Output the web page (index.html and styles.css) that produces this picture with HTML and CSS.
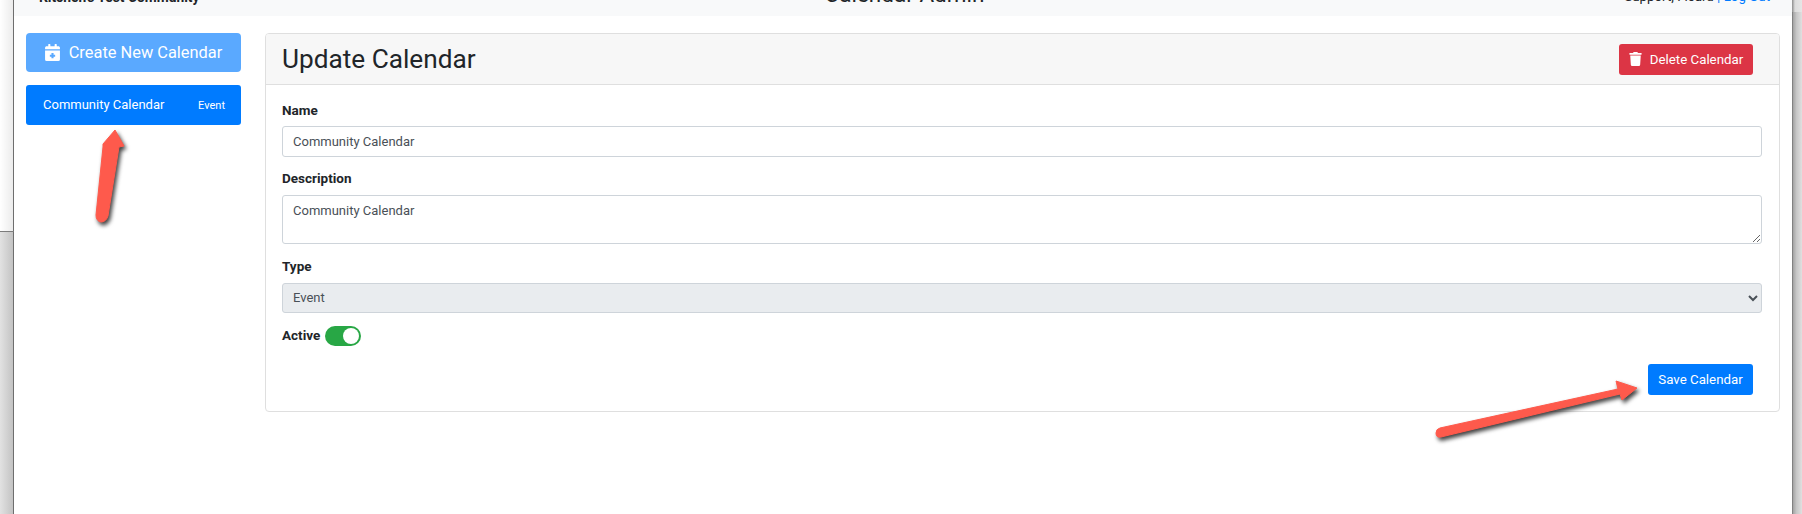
FILE: index.html
```html
<!DOCTYPE html>
<html lang="en">
<head>
<meta charset="utf-8">
<title>Calendar Admin</title>
<link rel="stylesheet" href="styles.css">
</head>
<body>
<div class="backdrop-left"><div class="bl-top"></div><div class="bl-bottom"></div></div>
<main class="modal">
  <header class="topbar">
    <div class="tb-left">Kitchen's Test Community</div>
    <div class="tb-title">Calendar Admin</div>
    <div class="tb-right">Support, Ficard <a href="#">| Log Out</a></div>
  </header>
  <div class="content">
    <aside class="sidebar">
      <button class="create-btn" type="button">
        <svg class="create-icon" viewBox="0 0 448 512" aria-hidden="true"><path fill="currentColor" fill-rule="evenodd" d="M0 192h448v272a48 48 0 0 1-48 48H48a48 48 0 0 1-48-48z M192 272h64v48h48v64h-48v48h-64v-48h-48v-64h48z M400 64h-48V16c0-8.800-7.200-16-16-16h-32c-8.800 0-16 7.200-16 16v48H160V16c0-8.800-7.200-16-16-16h-32c-8.800 0-16 7.200-16 16v48H48C21.500 64 0 85.500 0 112v48h448v-48c0-26.500-21.500-48-48-48z"/></svg>
        Create New Calendar
      </button>
      <div class="cal-item"><span class="cal-name">Community Calendar</span><span class="cal-type">Event</span></div>
    </aside>
    <section class="card">
      <div class="card-head">
        <h2 class="card-title">Update Calendar</h2>
        <button class="btn btn-danger" type="button">
          <svg class="trash-icon" viewBox="0 0 448 512" aria-hidden="true"><path fill="currentColor" d="M432 32H312l-9.400-18.700A24 24 0 0 0 281.100 0H166.800a23.700 23.700 0 0 0-21.400 13.300L136 32H16A16 16 0 0 0 0 48v32a16 16 0 0 0 16 16h416a16 16 0 0 0 16-16V48a16 16 0 0 0-16-16zM53.200 467a48 48 0 0 0 47.900 45h245.800a48 48 0 0 0 47.900-45L416 128H32z"/></svg>
          Delete Calendar
        </button>
      </div>
      <form class="card-body">
        <label class="field-label field-first" for="f-name">Name</label>
        <input class="control" id="f-name" type="text" value="Community Calendar">
        <label class="field-label" for="f-desc">Description</label>
        <textarea class="control area" id="f-desc">Community Calendar</textarea>
        <label class="field-label" for="f-type">Type</label>
        <select class="control select" id="f-type" disabled><option>Event</option></select>
        <div class="active-row"><span class="active-label">Active</span><span class="toggle"><span class="knob"></span></span></div>
        <div class="actions"><button class="btn btn-primary" type="button">Save Calendar</button></div>
      </form>
    </section>
  </div>
  <svg class="arrows" viewBox="0 0 1802 514" aria-hidden="true">
    <path class="arrow" d="M115 130 L124 146 L119 147 L108 216 Q106 222 101 222 Q96 221 96 215 L103 147 L103 144 Z"/>
    <path class="arrow" d="M1637 388 L1622 400 L1620 394 L1441 437 Q1436 438 1436 433 Q1436 429 1440 428 L1618 389 L1616 381 Z"/>
  </svg>
</main>
<div class="backdrop-right"><div class="br-top"></div><div class="br-bottom"></div></div>
</body>
</html>
```
FILE: styles.css
```css
* { box-sizing: border-box; }
html, body { margin: 0; height: 514px; overflow: hidden; }
body {
  display: flex;
  width: 1802px;
  font-family: Roboto, "Liberation Sans", Arial, sans-serif;
  font-size: 13px;
  color: #212529;
  background: #fff;
}
.backdrop-left { width: 14px; display: flex; flex-direction: column; }
.bl-top { height: 231px; background: linear-gradient(90deg, #fff, #ececec 90%, #6e6e6e 93%, #6e6e6e); }
.bl-bottom { flex: 1; background: linear-gradient(90deg, #e2e2e2, #c4c4c4 90%, #6e6e6e 93%, #6e6e6e); border-top: 1px solid #7c7c7c; }
.backdrop-right { width: 10px; display: flex; flex-direction: column; }
.br-top { height: 12px; background: linear-gradient(90deg, #8c8c8c, #dcdcdc 30%, #e6e6e6); }
.br-bottom { flex: 1; background: linear-gradient(90deg, #6e6e6e, #a8a8a8 15%, #c6c6c6 45%, #e0e0e0); }
.modal { flex: 1; display: flex; flex-direction: column; min-width: 0; background: #fff; position: relative; }
.topbar {
  height: 16px;
  flex: none;
  background: #f8f9fa;
  overflow: hidden;
  display: grid;
  grid-template-columns: 1fr auto 1fr;
  padding: 0 22px 0 25px;
  align-items: start;
}
.tb-left { font-weight: 700; font-size: 13.800px; margin-top: -12px; line-height: 18px; }
.tb-title { font-size: 22.500px; line-height: 28px; margin-top: -20px; }
.tb-right { text-align: right; font-size: 13.300px; margin-top: -12px; line-height: 18px; }
.tb-right a { color: #007bff; text-decoration: none; }
.content { display: flex; padding: 17px 12px 0; gap: 24px; align-items: flex-start; }
.sidebar { width: 215px; flex: none; display: flex; flex-direction: column; gap: 13px; }
.create-btn {
  height: 39px;
  border: 0;
  border-radius: 4px;
  background: #5aa9ff;
  color: #fff;
  font: 400 16.400px Roboto, "Liberation Sans", Arial, sans-serif;
  display: flex;
  align-items: center;
  justify-content: center;
  gap: 9px;
  padding: 0;
}
.create-icon { width: 15px; height: 17px; }
.cal-item {
  height: 40px;
  border-radius: 3px;
  background: #007bff;
  color: #fff;
  display: flex;
  justify-content: space-between;
  align-items: center;
  padding: 0 16px 0 17px;
}
.cal-name { font-size: 13px; font-weight: 400; margin-top: -2px; }
.cal-type { font-size: 11px; font-weight: 400; }
.card { flex: 1; min-width: 0; height: 379px; border: 1px solid #dfdfdf; border-radius: 4px; background: #fff; }
.card-head {
  height: 51px;
  background: #f7f7f7;
  border-bottom: 1px solid #dfdfdf;
  border-radius: 3px 3px 0 0;
  display: flex;
  justify-content: space-between;
  align-items: center;
  padding: 0 26px 0 16px;
}
.card-title { margin: 0; font-size: 26.200px; font-weight: 400; line-height: 32px; }
.btn {
  border: 0;
  border-radius: 3px;
  color: #fff;
  height: 31px;
  font: 400 13.300px Roboto, "Liberation Sans", Arial, sans-serif;
  display: inline-flex;
  align-items: center;
  gap: 8px;
  padding: 0;
  justify-content: center;
}
.btn-danger { background: #dc3545; width: 134px; }
.btn-primary { background: #007bff; width: 105px; }
.trash-icon { width: 13px; height: 14px; }
.card-body { padding: 15px 17px 0 16px; display: flex; flex-direction: column; }
.field-label { font-weight: 700; font-size: 13.500px; line-height: 20px; margin-bottom: 7px; display: block; }
.field-first { margin-bottom: 6px; }
.control {
  display: block;
  width: 100%;
  height: 31px;
  border: 1px solid #ced4da;
  border-radius: 3px;
  color: #495057;
  background: #fff;
  font: 400 13px Roboto, "Liberation Sans", Arial, sans-serif;
  padding: 0 10px;
  margin: 0 0 11px;
}
.area { height: 49px; padding: 7px 10px; line-height: 16px; margin-bottom: 12px; resize: vertical; }
.select { height: 30px; background: #e9ecef; padding: 0 6px 2px; opacity: 1; margin-bottom: 12px; }
.active-row { display: flex; align-items: center; gap: 5px; height: 21px; font-weight: 700; font-size: 13.500px; }
.active-label { margin-top: -2px; }
.toggle { width: 36px; height: 20px; border-radius: 10px; background: #28a745; display: flex; justify-content: flex-end; align-items: center; padding: 0 2px; }
.knob { width: 16px; height: 16px; border-radius: 50%; background: #fff; }
.actions { display: flex; justify-content: flex-end; margin-top: 18px; padding-right: 9px; }
.arrows { position: absolute; left: -14px; top: 0; width: 1802px; height: 514px; pointer-events: none; }
.arrow { fill: #fe5a4c; stroke: #fe5a4c; stroke-width: 1; stroke-linejoin: round; filter: drop-shadow(2px 3px 2px rgba(0,0,0,.75)); }
```
